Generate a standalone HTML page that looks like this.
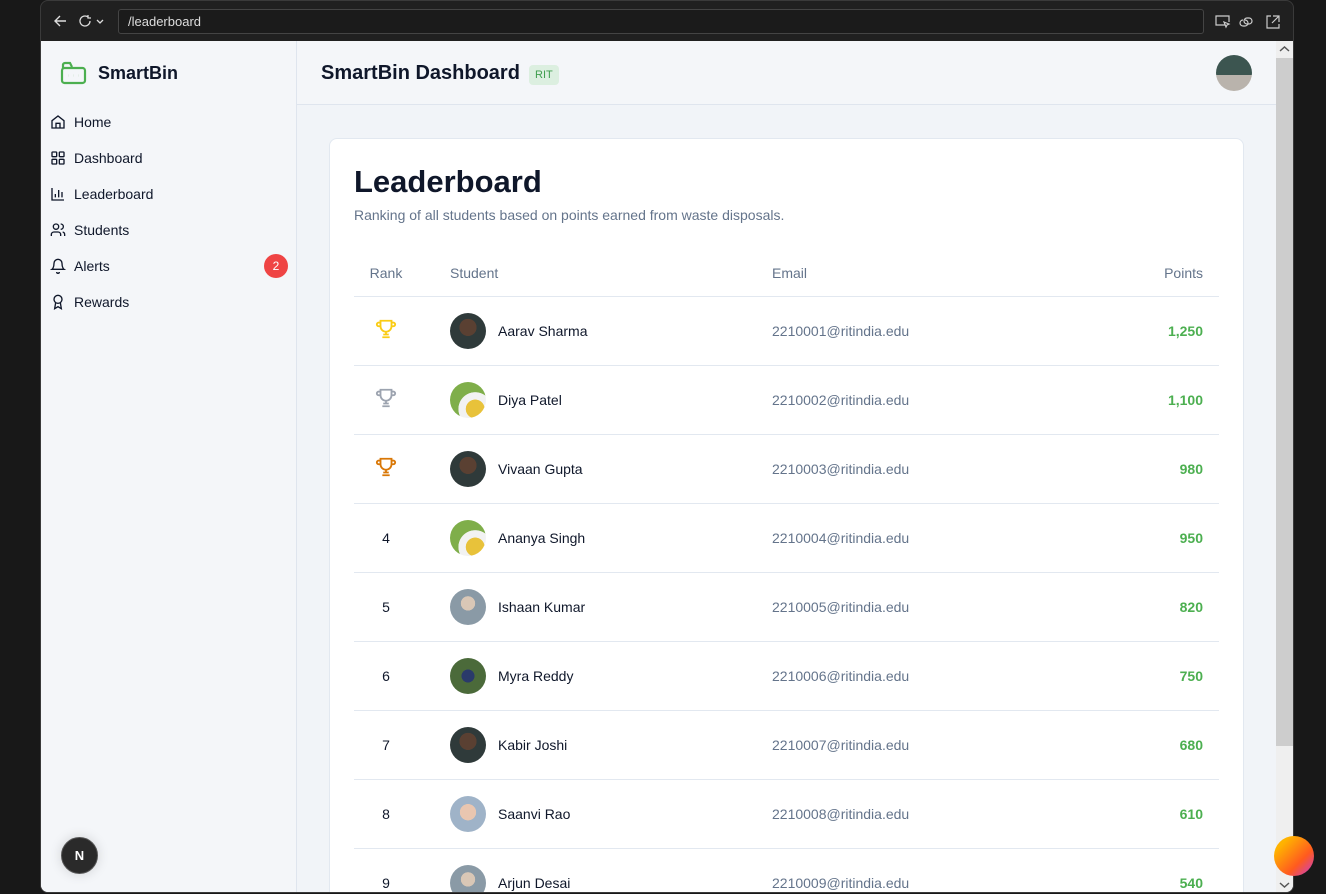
<!DOCTYPE html>
<html><head><meta charset="utf-8"><style>
*{box-sizing:border-box;margin:0;padding:0}
body{width:1326px;height:894px;background:#181818;font-family:"Liberation Sans",sans-serif;position:relative;overflow:hidden}
.win{position:absolute;left:40px;top:0;width:1254px;height:893px;background:#202020;border:1px solid #3a3a3a;border-radius:8px;overflow:hidden}
.url{position:absolute;left:77px;top:8px;width:1086px;height:25px;border:1px solid #444;border-radius:3px;background:#1b1b1b;color:#ddd;font-size:13px;line-height:23px;padding-left:9px}
.content{position:absolute;left:0;top:40px;width:1252px;height:852px;background:#f1f4f8;overflow:hidden}
.side{position:absolute;left:0;top:0;width:256px;height:852px;background:#f4f6f9;border-right:1px solid #dfe5ee}
.logo{position:absolute;left:19px;top:20px;display:flex;align-items:center;font-weight:bold;font-size:18px;color:#0f172a}
.nav{position:absolute;left:9px;top:63px;width:240px}
.nav div{height:36px;display:flex;align-items:center;font-size:14px;color:#0f172a;position:relative}
.nav svg{margin-right:8px}
.badge{position:absolute;right:-1px;top:6px;width:24px;height:24px;border-radius:50%;background:#ef4444;color:#fff;font-size:12px;text-align:center;line-height:24px}
.head{position:absolute;left:256px;top:0;width:979px;height:64px;border-bottom:1px solid #dfe5ee;background:#f4f6f9}
.head h1{position:absolute;left:24px;top:21px;font-size:20px;font-weight:bold;color:#0f172a}
.rit{position:absolute;left:232px;top:24px;background:#dcefe0;color:#3f9e4e;font-size:11px;padding:4px 6px;border-radius:4px}
.av{position:absolute;left:919px;top:14px;width:36px;height:36px;border-radius:50%;background:linear-gradient(#3c5550 0 55%,#b9b3ac 55%)}
.sb{position:absolute;left:1235px;top:0;width:17px;height:852px;background:#efefef}
.thumb{position:absolute;left:1235px;top:17px;width:17px;height:688px;background:#cdcdcd}
.card{position:absolute;left:288px;top:97px;width:915px;height:800px;background:#fff;border:1px solid #e2e8f0;border-radius:8px}
.card h2{position:absolute;left:24px;top:25px;font-size:31px;color:#0f172a}
.sub{position:absolute;left:24px;top:68px;font-size:14px;color:#64748b}
table{position:absolute;left:24px;top:111px;width:865px;border-collapse:collapse;font-size:14px}
th{height:46px;font-weight:normal;color:#64748b;text-align:left;border-bottom:1px solid #e2e8f0}
td{height:69px;border-bottom:1px solid #e2e8f0;color:#0f172a}
.c1{width:96px;text-align:center;padding-right:32px}
.c3{color:#64748b}
.c4{text-align:right;padding-right:16px;color:#4caf50;font-weight:bold}
.st{display:flex;align-items:center}
.pic{width:36px;height:36px;border-radius:50%;margin-right:12px;background:radial-gradient(circle at 50% 40%,#5a4032 0 30%,#2f3a3a 31%)}
.p2{background:radial-gradient(circle at 70% 75%,#e8c23a 0 25%,#f2f2f2 26% 45%,#7fae4a 46%)}
.p3{background:radial-gradient(circle at 50% 40%,#d9c7b6 0 25%,#8a9aa6 26%)}
.p4{background:radial-gradient(circle at 50% 50%,#2a3a6a 0 25%,#4b6a3a 26%)}
.p5{background:radial-gradient(circle at 50% 45%,#e9c6b0 0 30%,#9fb3c8 31%)}
</style></head><body>
<div class="win">
<svg style="position:absolute;left:12px;top:13px" width="14" height="14" viewBox="0 0 14 14" fill="none" stroke="#ddd" stroke-width="1.4"><path d="M13 7H2M7 2L2 7l5 5"/></svg>
<svg style="position:absolute;left:38px;top:13px" width="28" height="14" viewBox="0 0 28 14" fill="none" stroke="#ddd" stroke-width="1.3"><path d="M11 7a5 5 0 1 1-2-4M9 1v3h3"/><path d="M18 6l3 3 3-3"/></svg>
<div class="url">/leaderboard</div>
<svg style="position:absolute;left:1174px;top:13px" width="70" height="16" viewBox="0 0 70 16" fill="none" stroke="#ccc" stroke-width="1.2"><path d="M10 11H1V2h13v6M9 8l5 2-2 1-1 2z"/><path d="M30 6a3 3 0 0 1 0 6h-2a3 3 0 0 1 0-6M32 4h2a3 3 0 0 1 0 6h-2a3 3 0 0 1 0-6"/><path d="M56 2h-4v12h12v-4M58 2h6v6M64 2l-7 7"/></svg>
<div class="content">
<div class="side">
<div class="logo"><svg width="27" height="24" viewBox="0 0 27 24" fill="none" stroke="#4caf50" stroke-width="2.2"><rect x="2" y="7" width="23" height="15" rx="2.5"/><path d="M3 8V4a2 2 0 0 1 2-2h5l2 4"/><path d="M8.5 14.5h.1M13.5 14.5h.1M18.5 14.5h.1"/></svg><span style="margin-left:11px">SmartBin</span></div>
<div class="nav">
<div><svg width="16" height="16" viewBox="0 0 24 24" fill="none" stroke="#0f172a" stroke-width="2"><path d="M3 10l9-7 9 7v11H3z"/><path d="M9 21v-7h6v7"/></svg>Home</div>
<div><svg width="16" height="16" viewBox="0 0 24 24" fill="none" stroke="#0f172a" stroke-width="2"><rect x="3" y="3" width="7" height="7" rx="1"/><rect x="14" y="3" width="7" height="7" rx="1"/><rect x="3" y="14" width="7" height="7" rx="1"/><rect x="14" y="14" width="7" height="7" rx="1"/></svg>Dashboard</div>
<div><svg width="16" height="16" viewBox="0 0 24 24" fill="none" stroke="#0f172a" stroke-width="2"><path d="M3 3v18h18M8 17v-5M13 17V6M18 17v-8"/></svg>Leaderboard</div>
<div><svg width="16" height="16" viewBox="0 0 24 24" fill="none" stroke="#0f172a" stroke-width="2"><circle cx="9" cy="7" r="4"/><path d="M2 21v-2a4 4 0 0 1 4-4h6a4 4 0 0 1 4 4v2M16 3a4 4 0 0 1 0 8M22 21v-2a4 4 0 0 0-3-4"/></svg>Students</div>
<div><svg width="16" height="16" viewBox="0 0 24 24" fill="none" stroke="#0f172a" stroke-width="2"><path d="M6 8a6 6 0 0 1 12 0c0 7 3 9 3 9H3s3-2 3-9M10 21a2 2 0 0 0 4 0"/></svg>Alerts<span class="badge" style="right:2px">2</span></div>
<div><svg width="16" height="16" viewBox="0 0 24 24" fill="none" stroke="#0f172a" stroke-width="2"><circle cx="12" cy="8" r="6"/><path d="M8.5 13L7 22l5-3 5 3-1.5-9"/></svg>Rewards</div>
</div>
<div style="position:absolute;left:20px;top:796px;width:37px;height:37px;border-radius:50%;background:#2a2a2a;border:1px solid #555;color:#fff;font-size:13px;font-weight:bold;text-align:center;line-height:35px;box-shadow:0 0 12px rgba(0,0,0,.15)">N</div>
</div>
<div class="head"><h1>SmartBin Dashboard</h1><span class="rit">RIT</span><div class="av"></div></div>
<div class="sb"></div><div class="thumb"></div>
<svg style="position:absolute;left:1238px;top:4px" width="11" height="8" viewBox="0 0 11 8" fill="none" stroke="#555" stroke-width="1.5"><path d="M1 6l4.5-4 4.5 4"/></svg>
<svg style="position:absolute;left:1238px;top:840px" width="11" height="8" viewBox="0 0 11 8" fill="none" stroke="#555" stroke-width="1.5"><path d="M1 2l4.5 4 4.5-4"/></svg>
<div class="card">
<h2>Leaderboard</h2>
<div class="sub">Ranking of all students based on points earned from waste disposals.</div>
<table>
<tr><th class="c1" style="text-align:center">Rank</th><th style="width:322px">Student</th><th>Email</th><th class="c4" style="color:#64748b;font-weight:normal">Points</th></tr>
<tr><td class="c1"><svg width="22" height="22" viewBox="0 0 24 24" fill="none" stroke="#facc15" stroke-width="2"><path d="M6 9H4a2 2 0 0 1 0-4h2M18 9h2a2 2 0 0 0 0-4h-2M6 3h12v6a6 6 0 0 1-12 0zM12 15v3M8 21h8M9 18h6"/></svg></td><td><div class="st"><div class="pic"></div>Aarav Sharma</div></td><td class="c3">2210001@ritindia.edu</td><td class="c4">1,250</td></tr>
<tr><td class="c1"><svg width="22" height="22" viewBox="0 0 24 24" fill="none" stroke="#9ca3af" stroke-width="2"><path d="M6 9H4a2 2 0 0 1 0-4h2M18 9h2a2 2 0 0 0 0-4h-2M6 3h12v6a6 6 0 0 1-12 0zM12 15v3M8 21h8M9 18h6"/></svg></td><td><div class="st"><div class="pic p2"></div>Diya Patel</div></td><td class="c3">2210002@ritindia.edu</td><td class="c4">1,100</td></tr>
<tr><td class="c1"><svg width="22" height="22" viewBox="0 0 24 24" fill="none" stroke="#d97706" stroke-width="2"><path d="M6 9H4a2 2 0 0 1 0-4h2M18 9h2a2 2 0 0 0 0-4h-2M6 3h12v6a6 6 0 0 1-12 0zM12 15v3M8 21h8M9 18h6"/></svg></td><td><div class="st"><div class="pic"></div>Vivaan Gupta</div></td><td class="c3">2210003@ritindia.edu</td><td class="c4">980</td></tr>
<tr><td class="c1">4</td><td><div class="st"><div class="pic p2"></div>Ananya Singh</div></td><td class="c3">2210004@ritindia.edu</td><td class="c4">950</td></tr>
<tr><td class="c1">5</td><td><div class="st"><div class="pic p3"></div>Ishaan Kumar</div></td><td class="c3">2210005@ritindia.edu</td><td class="c4">820</td></tr>
<tr><td class="c1">6</td><td><div class="st"><div class="pic p4"></div>Myra Reddy</div></td><td class="c3">2210006@ritindia.edu</td><td class="c4">750</td></tr>
<tr><td class="c1">7</td><td><div class="st"><div class="pic"></div>Kabir Joshi</div></td><td class="c3">2210007@ritindia.edu</td><td class="c4">680</td></tr>
<tr><td class="c1">8</td><td><div class="st"><div class="pic p5"></div>Saanvi Rao</div></td><td class="c3">2210008@ritindia.edu</td><td class="c4">610</td></tr>
<tr><td class="c1">9</td><td><div class="st"><div class="pic p3"></div>Arjun Desai</div></td><td class="c3">2210009@ritindia.edu</td><td class="c4">540</td></tr>
</table>
</div>
</div>
</div>
<div style="position:absolute;left:1274px;top:836px;width:40px;height:40px;border-radius:50%;background:linear-gradient(135deg,#ffb300 20%,#ff5a1f 65%,#c43bd6)"></div>
</body></html>
